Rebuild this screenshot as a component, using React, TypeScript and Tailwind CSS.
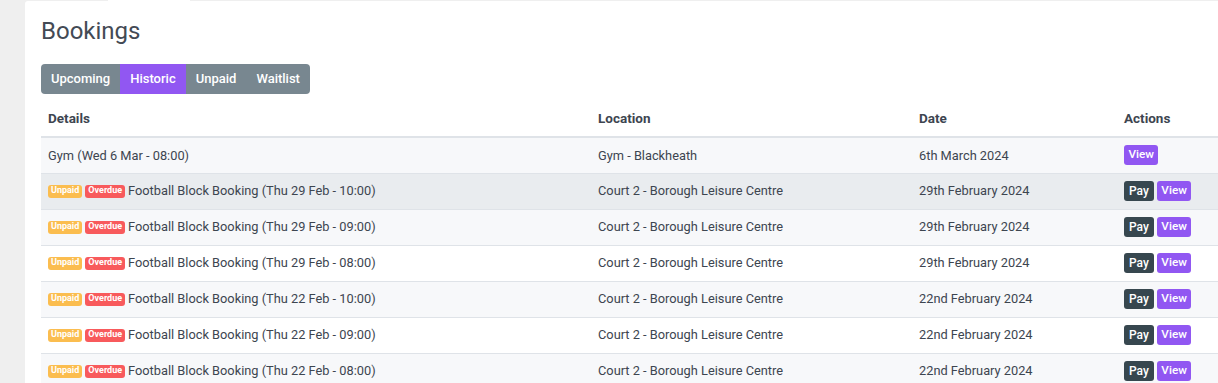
import React from "react";

type Row = { details: string; location: string; date: string; unpaid: boolean };

const rows: Row[] = [
  { details: "Gym (Wed 6 Mar - 08:00)", location: "Gym - Blackheath", date: "6th March 2024", unpaid: false },
  { details: "Football Block Booking (Thu 29 Feb - 10:00)", location: "Court 2 - Borough Leisure Centre", date: "29th February 2024", unpaid: true },
  { details: "Football Block Booking (Thu 29 Feb - 09:00)", location: "Court 2 - Borough Leisure Centre", date: "29th February 2024", unpaid: true },
  { details: "Football Block Booking (Thu 29 Feb - 08:00)", location: "Court 2 - Borough Leisure Centre", date: "29th February 2024", unpaid: true },
  { details: "Football Block Booking (Thu 22 Feb - 10:00)", location: "Court 2 - Borough Leisure Centre", date: "22nd February 2024", unpaid: true },
  { details: "Football Block Booking (Thu 22 Feb - 09:00)", location: "Court 2 - Borough Leisure Centre", date: "22nd February 2024", unpaid: true },
  { details: "Football Block Booking (Thu 22 Feb - 08:00)", location: "Court 2 - Borough Leisure Centre", date: "22nd February 2024", unpaid: true },
];

const tabs = ["Upcoming", "Historic", "Unpaid", "Waitlist"];

export default function App() {
  return (
    <div
      className="w-full h-[383px] overflow-hidden bg-[#efefef] pt-px text-[#3d4550]"
      style={{ fontFamily: "Roboto, 'Liberation Sans', sans-serif" }}
    >
      <div className="relative ml-[25px] w-[1210px] h-[400px] bg-white rounded-tl-[3px] px-4">
        <div className="absolute -top-px left-[83px] w-[82px] h-px bg-white" />
        <h1 className="pt-[16px] text-[24px] leading-[28px] font-normal text-[#434a54]">Bookings</h1>
        <div className="mt-[19px] inline-flex h-[30px] rounded-[4px] overflow-hidden bg-[#788790]">
          {tabs.map((t) => (
            <div
              key={t}
              className={
                "flex items-center px-[10px] text-[13px] font-medium text-white " +
                (t === "Historic" ? "bg-[#9157f2]" : "")
              }
            >
              {t}
            </div>
          ))}
        </div>
        <table className="mt-[6px] w-full border-collapse text-[12.8px] text-left">
          <thead>
            <tr className="h-[37px] border-b-2 border-[#dfe3e8]">
              <th className="w-[550px] px-[7px] text-[13.5px] font-bold">Details</th>
              <th className="w-[321px] px-[7px] text-[13.5px] font-bold">Location</th>
              <th className="w-[205px] px-[7px] text-[13.5px] font-bold">Date</th>
              <th className="px-[7px] text-[13.5px] font-bold">Actions</th>
            </tr>
          </thead>
          <tbody>
            {rows.map((r, i) => (
              <tr
                key={i}
                className={
                  "h-[36px] border-b border-[#dfe3e8] " +
                  (i === 1 ? "bg-[#e9ecef]" : i % 2 === 0 ? "bg-[#f7f8fa]" : "bg-white")
                }
              >
                <td className="px-[7px]">
                  <div className="flex items-center">
                    {r.unpaid && (
                      <>
                        <span className="mr-[3px] rounded-[3px] bg-[#fbbd4f] px-[3px] h-[13px] flex items-center text-[9px] font-bold text-white">
                          Unpaid
                        </span>
                        <span className="mr-[3px] rounded-[3px] bg-[#f85a5c] px-[3px] h-[13px] flex items-center text-[9px] font-bold text-white">
                          Overdue
                        </span>
                      </>
                    )}
                    <span>{r.details}</span>
                  </div>
                </td>
                <td className="px-[7px]">{r.location}</td>
                <td className="px-[7px]">{r.date}</td>
                <td className="px-[7px]">
                  <div className="flex items-center gap-[3px]">
                    {r.unpaid && (
                      <span className="flex h-[20px] items-center rounded-[3px] bg-[#37474f] px-[5px] text-[12px] font-medium text-white">
                        Pay
                      </span>
                    )}
                    <span className="flex h-[20px] items-center rounded-[3px] bg-[#9157f2] px-[4.5px] text-[11.7px] font-medium text-white">
                      View
                    </span>
                  </div>
                </td>
              </tr>
            ))}
          </tbody>
        </table>
      </div>
    </div>
  );
}
